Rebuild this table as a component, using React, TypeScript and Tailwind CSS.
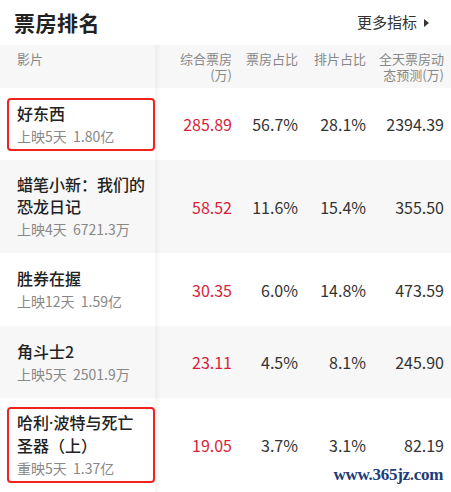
const font = { fontFamily: '"Noto Sans CJK SC", "Noto Sans", sans-serif' };

type Movie = {
  name: React.ReactNode[];
  sub: string;
  box: string;
  share: string;
  seat: string;
  forecast: string;
  boxed?: boolean;
  gray?: boolean;
  h: string;
};

const dot = <span style={{ fontFamily: '"Noto Sans", sans-serif' }}>·</span>;

const movies: Movie[] = [
  { name: ["好东西"], sub: "上映5天  1.80亿", box: "285.89", share: "56.7%", seat: "28.1%", forecast: "2394.39", boxed: true, h: "h-[72px]" },
  { name: ["蜡笔小新：我们的", "恐龙日记"], sub: "上映4天  6721.3万", box: "58.52", share: "11.6%", seat: "15.4%", forecast: "355.50", gray: true, h: "h-[93px]" },
  { name: ["胜券在握"], sub: "上映12天  1.59亿", box: "30.35", share: "6.0%", seat: "14.8%", forecast: "473.59", h: "h-[73px]" },
  { name: ["角斗士2"], sub: "上映5天  2501.9万", box: "23.11", share: "4.5%", seat: "8.1%", forecast: "245.90", gray: true, h: "h-[72px]" },
  { name: [<>哈利{dot}波特与死亡</>, "圣器（上）"], sub: "重映5天  1.37亿", box: "19.05", share: "3.7%", seat: "3.1%", forecast: "82.19", boxed: true, h: "h-[94px]" },
];

function Row({ m }: { m: Movie }) {
  return (
    <div className={`flex ${m.h} ${m.gray ? "bg-[#f7f7f7]" : "bg-white"}`}>
      <div className="relative w-[155px] shrink-0 flex items-center pl-[7px]">
        <div className={`w-[148px] rounded-[4px] pl-[8px] py-[2px] border-2 ${m.boxed ? "border-[#f2231f]" : "border-transparent"}`}>
          {m.name.map((n, i) => (
            <div key={i} className="text-[16px] leading-[22px] font-medium text-[#222]">{n}</div>
          ))}
          <div className="text-[14px] leading-[22px] text-[#888] whitespace-pre mt-[1px]">{m.sub}</div>
        </div>
        <div className="absolute right-[-6px] top-0 bottom-0 w-[6px] bg-gradient-to-r from-black/[0.04] to-transparent" />
      </div>
      <div className="flex items-center text-[16px] text-right">
        <div className="w-[77px] text-[#d81e3a]">{m.box}</div>
        <div className="w-[66px] text-[#333]">{m.share}</div>
        <div className="w-[68px] text-[#333]">{m.seat}</div>
        <div className="w-[78px] text-[#333]">{m.forecast}</div>
      </div>
    </div>
  );
}

export default function App() {
  return (
    <div className="relative w-[451px] h-[492px] bg-white overflow-hidden" style={font}>
      <div className="flex items-center justify-between h-[45px] pl-[14px] pr-[22px]">
        <h1 className="text-[21px] font-bold text-[#222] tracking-[0.5px]">票房排名</h1>
        <div className="flex items-center gap-[7px] text-[15px] text-[#333]">
          更多指标
          <span className="w-0 h-0 border-y-[4px] border-y-transparent border-l-[5px] border-l-[#333]" />
        </div>
      </div>
      <div className="flex h-[43px] bg-[#f7f7f7] text-[13px] leading-[16px] text-[#888]">
        <div className="relative w-[155px] shrink-0 pl-[17px] pt-[6px]">
          影片
          <div className="absolute right-[-6px] top-0 bottom-0 w-[6px] bg-gradient-to-r from-black/[0.04] to-transparent" />
        </div>
        <div className="flex text-right pt-[6px]">
          <div className="w-[77px]">综合票房<br />(万)</div>
          <div className="w-[66px]">票房占比</div>
          <div className="w-[68px]">排片占比</div>
          <div className="w-[78px] pl-[10px]">全天票房动态预测(万)</div>
        </div>
      </div>
      {movies.map((m) => (
        <Row key={m.box} m={m} />
      ))}
      <div
        className="absolute right-[8px] bottom-[5px] text-[17px] font-bold text-[#1d3b78] tracking-[-0.3px]"
        style={{ fontFamily: '"Liberation Serif", "DejaVu Serif", serif' }}
      >
        www.365jz.com
      </div>
    </div>
  );
}
